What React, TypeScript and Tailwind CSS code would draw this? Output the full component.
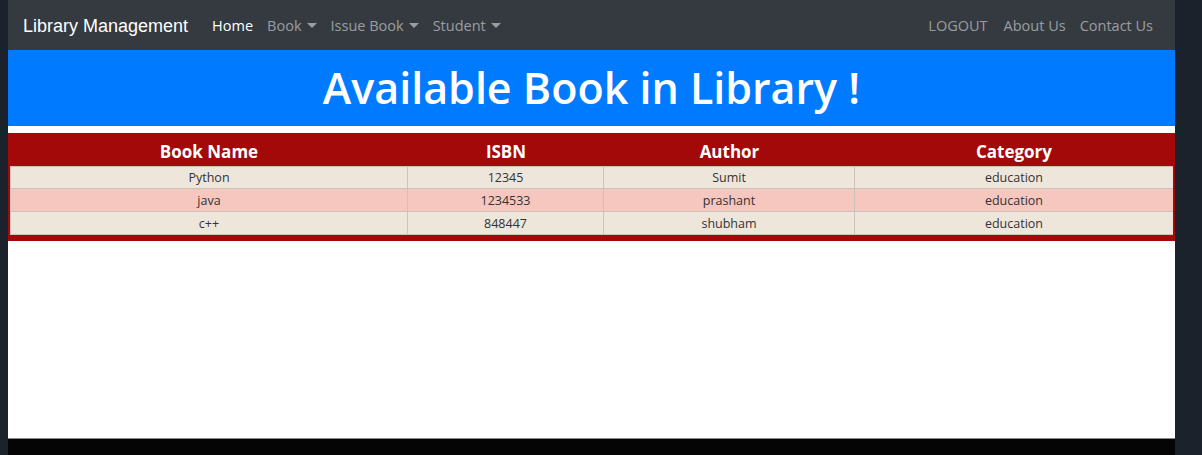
import React from "react";

const rows = [
  { name: "Python", isbn: "12345", author: "Sumit", cat: "education", bg: "bg-[#eee6db]" },
  { name: "java", isbn: "1234533", author: "prashant", cat: "education", bg: "bg-[#f5c7bf]" },
  { name: "c++", isbn: "848447", author: "shubham", cat: "education", bg: "bg-[#eee6db]" },
];

const Caret = () => (
  <span className="ml-[5px] inline-block w-0 h-0 border-l-[5px] border-r-[5px] border-t-[5px] border-l-transparent border-r-transparent border-t-current align-[3px]" />
);

export default function App() {
  const seg = { fontFamily: '"Open Sans", "Noto Sans", sans-serif' };
  return (
    <div className="flex w-[1202px] h-[455px] bg-[#1b222b] overflow-hidden" style={seg}>
      <div className="w-[8px] shrink-0" />
      <div className="w-[1167px] shrink-0 flex flex-col bg-white">
        <nav className="h-[50px] bg-[#343a40] flex items-center pl-[15px] pr-[22px] pt-[2px]">
          <span
            className="text-white text-[18px] mr-[24px] leading-none"
            style={{ fontFamily: '"Liberation Sans", Arial, sans-serif' }}
          >
            Library Management
          </span>
          <div className="flex items-center text-[14.5px] gap-[14px]">
            <span className="text-white">Home</span>
            <span className="text-white/50">Book<Caret /></span>
            <span className="text-white/50">Issue Book<Caret /></span>
            <span className="text-white/50">Student<Caret /></span>
          </div>
          <div className="ml-auto flex items-center text-[14.5px] text-white/50">
            <span className="mr-[16px]">LOGOUT</span>
            <span className="mr-[14px]">About Us</span>
            <span>Contact Us</span>
          </div>
        </nav>
        <div className="h-[76px] bg-[#007bff] flex items-center justify-center">
          <h1 className="text-white text-[43px] font-semibold leading-none pb-[2px]">Available Book in Library !</h1>
        </div>
        <div className="h-[7px]" />
        <div className="bg-[#a30909] px-[2px] pb-[6px]">
          <div className="grid grid-cols-[398px_196px_251px_318px]">
            {["Book Name", "ISBN", "Author", "Category"].map((h) => (
              <div key={h} className="h-[33px] flex items-center justify-center text-white font-bold text-[17px] pt-[5px]">
                {h}
              </div>
            ))}
            {rows.map((r, i) =>
              [r.name, r.isbn, r.author, r.cat].map((c, j) => (
                <div
                  key={`${i}-${j}`}
                  className={`${r.bg} h-[23px] flex items-center justify-center text-[12.5px] text-[#333] border-[#cbc3bb] border-b ${j < 3 ? "border-r" : ""} ${j === 0 ? "border-l" : ""} ${i === 0 ? "border-t" : ""} pt-[2px]`}
                >
                  {c}
                </div>
              ))
            )}
          </div>
        </div>
        <div className="flex-1 bg-white" />
        <div className="h-[1px] bg-[#8a8a8a]" />
        <div className="h-[16px] bg-[#050505]" />
      </div>
      <div className="flex-1" />
    </div>
  );
}
